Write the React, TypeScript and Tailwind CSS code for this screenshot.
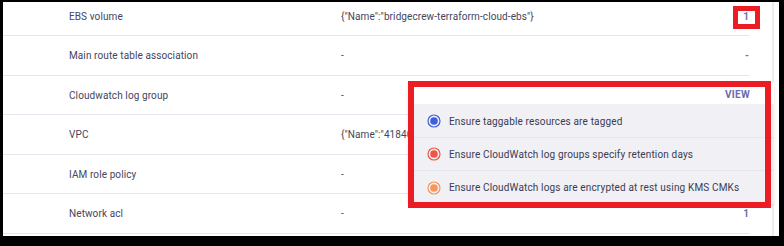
import React from "react";

const rows = [
  { name: "EBS volume", tags: '{"Name":"bridgecrew-terraform-cloud-ebs"}', count: "1", mark: true },
  { name: "Main route table association", tags: "-", count: "-" },
  { name: "Cloudwatch log group", tags: "-", count: "" },
  { name: "VPC", tags: '{"Name":"41840"}', count: "" },
  { name: "IAM role policy", tags: "-", count: "" },
  { name: "Network acl", tags: "-", count: "1" },
];

const policies = [
  { text: "Ensure taggable resources are tagged", color: "#3f5fd8" },
  { text: "Ensure CloudWatch log groups specify retention days", color: "#ef5546" },
  { text: "Ensure CloudWatch logs are encrypted at rest using KMS CMKs", color: "#f7955a" },
];

const Dot = ({ color }: { color: string }) => (
  <svg width="14" height="14" viewBox="0 0 14 14" className="shrink-0">
    <circle cx="7" cy="7" r="6" fill="none" stroke={color} strokeWidth="1.2" />
    <circle cx="7" cy="7" r="3.8" fill={color} />
  </svg>
);

export default function App() {
  return (
    <div
      className="w-[784px] h-[246px] bg-black pl-[3px] pt-[2px] pr-[5px] pb-[10px]"
      style={{ fontFamily: "Roboto, 'Liberation Sans', sans-serif" }}
    >
      <div className="relative w-full h-full bg-white overflow-hidden flex">
        {/* table */}
        <div className="w-[747px] mt-[-5.5px] shrink-0">
          {rows.map((r) => (
            <div
              key={r.name}
              className="h-[39.5px] border-b border-[#e6e6ee] flex items-center text-[10px] tracking-[0.1px] text-[#45455e]"
            >
              <div className="w-[338px] pl-[66px] pt-[1px] shrink-0">{r.name}</div>
              <div className="flex-1 pt-[1px]">{r.tags}</div>
              <div className="pr-[1px] pt-[1px] font-bold text-[#7272a8]">{r.count}</div>
            </div>
          ))}
        </div>
        {/* scrollbar edge */}
        <div className="ml-[22px] w-[2px] h-full bg-[#ececf3]" />

        {/* policy popup */}
        <div className="absolute left-[405px] top-[81px] w-[366px] shadow-sm">
          <div className="h-[21px] bg-white flex items-center justify-end pr-[24px] pt-[1px] text-[10px] font-bold tracking-[0.3px] text-[#6b6bab]">
            VIEW
          </div>
          <div className="bg-[#f0f0f5] pt-[1px]">
            {policies.map((p, i) => (
              <div
                key={p.text}
                className={`h-[33px] flex items-center gap-[8px] pl-[19px] text-[10px] tracking-[0.15px] text-[#3b3b52] ${
                  i < policies.length - 1 ? "border-b border-[#e5e5ec]" : ""
                }`}
              >
                <Dot color={p.color} />
                {p.text}
              </div>
            ))}
          </div>
        </div>

        {/* annotation boxes */}
        <div className="absolute left-[730px] top-[4px] w-[27px] h-[23px] border-[5px] border-[#ec1c24]" />
        <div className="absolute left-[405px] top-[79px] w-[363px] h-[127px] border-[6px] border-[#ec1c24]" />
      </div>
    </div>
  );
}
